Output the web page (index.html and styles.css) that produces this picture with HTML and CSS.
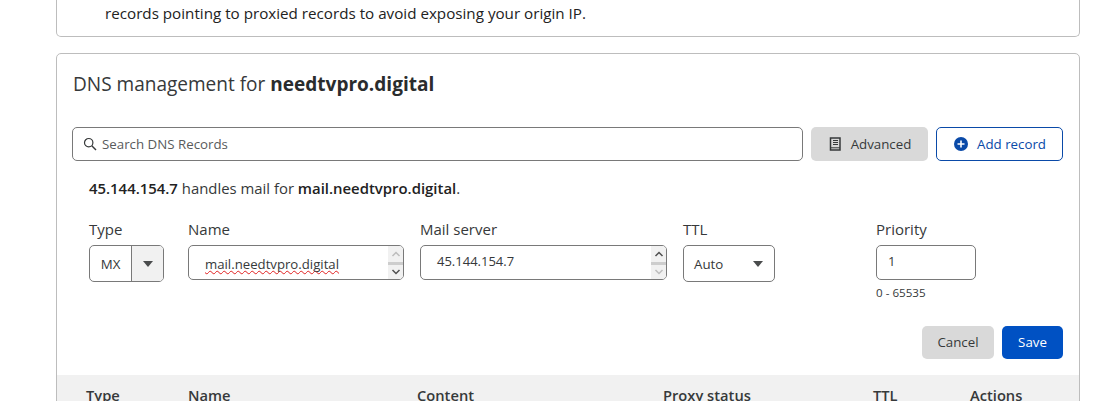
FILE: index.html
```html
<!DOCTYPE html>
<html lang="en">
<head>
<meta charset="utf-8">
<title>DNS management</title>
<link rel="stylesheet" href="styles.css">
</head>
<body>
<main class="page">
  <section class="card notice">
    <p class="notice-text">records pointing to proxied records to avoid exposing your origin IP.</p>
  </section>
  <section class="card dns">
    <h2 class="title">DNS management for <strong>needtvpro.digital</strong></h2>
    <div class="toolbar">
      <div class="search">
        <svg class="search-icon" viewBox="0 0 14 14" width="14" height="14"><circle cx="5.7" cy="5.7" r="4.2" fill="none" stroke="#36393a" stroke-width="1.2"/><path d="M8.8 8.8 13 13" stroke="#36393a" stroke-width="1.4" fill="none"/></svg>
        <span>Search DNS Records</span>
      </div>
      <button class="btn btn-grey btn-adv">
        <svg viewBox="0 0 12 14" width="12" height="14"><path d="M1.5 1h9.500v12h-9.500z" fill="none" stroke="#36393a" stroke-width="1.500"/><path d="M4 3.500h5M4 5.500h5M4 7.500h5" stroke="#36393a" stroke-width="1"/><path d="M1 10.800h10" stroke="#36393a" stroke-width="1"/></svg>
        Advanced
      </button>
      <button class="btn btn-outline">
        <svg viewBox="0 0 14 14" width="14" height="14"><circle cx="7" cy="7" r="7" fill="#0a4aa8"/><path d="M7 3.500v7M3.500 7h7" stroke="#fff" stroke-width="1.600"/></svg>
        Add record
      </button>
    </div>
    <p class="summary"><b>45.144.154.7</b> handles mail for <b>mail.needtvpro.digital</b>.</p>
    <div class="form">
      <div class="field f-type">
        <label class="label">Type</label>
        <div class="select-type"><span class="st-val">MX</span><span class="st-arrow"><i class="caret"></i></span></div>
      </div>
      <div class="field f-name">
        <label class="label">Name</label>
        <div class="textarea">
          <span class="val val-name">mail.needtvpro.digital</span>
          <div class="spin">
            <svg class="spin-a" viewBox="0 0 10 8" width="10" height="8"><path d="M1.500 6 5 2.500 8.500 6" fill="none" stroke="#bdbdbd" stroke-width="1.500"/></svg>
            <i class="spin-thumb"></i>
            <svg class="spin-a" viewBox="0 0 10 8" width="10" height="8"><path d="M1.500 2 5 5.500 8.500 2" fill="none" stroke="#505050" stroke-width="1.500"/></svg>
          </div>
        </div>
      </div>
      <div class="field f-mail">
        <label class="label">Mail server</label>
        <div class="textarea">
          <span class="val val-mail">45.144.154.7</span>
          <div class="spin">
            <svg class="spin-a" viewBox="0 0 10 8" width="10" height="8"><path d="M1.500 6 5 2.500 8.500 6" fill="none" stroke="#505050" stroke-width="1.500"/></svg>
            <i class="spin-thumb"></i>
            <svg class="spin-a" viewBox="0 0 10 8" width="10" height="8"><path d="M1.500 2 5 5.500 8.500 2" fill="none" stroke="#bdbdbd" stroke-width="1.500"/></svg>
          </div>
        </div>
      </div>
      <div class="field f-ttl">
        <label class="label">TTL</label>
        <div class="select-ttl"><span>Auto</span><i class="caret"></i></div>
      </div>
      <div class="field f-pri">
        <label class="label">Priority</label>
        <div class="textarea"><span class="val val-pri">1</span></div>
        <div class="help">0 - 65535</div>
      </div>
    </div>
    <div class="actions">
      <button class="btn btn-grey btn-cancel">Cancel</button>
      <button class="btn btn-blue">Save</button>
    </div>
    <div class="thead">
      <span>Type</span><span>Name</span><span>Content</span><span>Proxy status</span><span>TTL</span><span>Actions</span>
    </div>
  </section>
</main>
</body>
</html>
```
FILE: styles.css
```css
* { box-sizing: border-box; }
html, body { margin: 0; height: 401px; overflow: hidden; background: #fff; }
body { font-family: "Open Sans", "Noto Sans", sans-serif; color: #36393a; font-size: 13.300px; }
.page { width: 1024px; margin-left: 56px; display: flex; flex-direction: column; gap: 16px; }
.card { border: 1px solid #bdbdbd; border-radius: 5px; background: #fff; }
.notice { height: 37px; border-top: 0; border-radius: 0 0 5px 5px; padding-left: 48px; }
.notice-text { margin: 0; font-size: 15.200px; line-height: 26px; color: #222; white-space: nowrap; }
.dns { height: 360px; overflow: hidden; }
.title { margin: 0; padding: 16px 0 0 16px; font-size: 19.050px; line-height: 28px; font-weight: 400; color: #36393a; }
.title strong { font-weight: 700; color: #2a2c2d; }
.toolbar { display: flex; gap: 8px; margin: 29px 16px 0 15px; height: 34px; }
.search { width: 731px; border: 1px solid #797979; border-radius: 5px; display: flex; align-items: center; padding-left: 10px; gap: 5px; color: #595b5c; }
.btn { font: inherit; border-radius: 5px; border: 0; display: inline-flex; align-items: center; justify-content: center; color: #36393a; padding: 0; }
.btn-grey { background: #d9d9d9; }
.btn-adv { width: 117px; gap: 10px; padding-left: 1px; }
.btn-outline { width: 127px; gap: 9px; padding-left: 1px; background: #fff; border: 1px solid #0a4aa8; color: #0a4aa8; }
.summary { margin: 0; padding: 18px 0 0 32px; font-size: 14.900px; line-height: 19px; color: #36393a; }
.summary b { color: #222; font-weight: 600; }
.form { display: flex; align-items: flex-start; gap: 16px; margin: 21px 0 0 32px; height: 107px; }
.field { display: flex; flex-direction: column; }
.label { font-size: 15px; line-height: 20px; margin-bottom: 6px; height: 20px; color: #36393a; }
.f-type { width: 75px; margin-right: 8px; }
.f-name { width: 216px; }
.f-mail { width: 247px; }
.f-ttl { width: 92px; margin-right: 85px; }
.f-pri { width: 100px; }
.select-type { height: 37px; border: 1px solid #797979; border-radius: 5px; display: flex; overflow: hidden; }
.st-val { width: 42px; display: flex; align-items: center; justify-content: center; border-right: 1px solid #797979; }
.st-arrow { flex: 1; background: #f1f1f1; display: flex; align-items: center; justify-content: center; }
.caret { width: 0; height: 0; border-left: 5px solid transparent; border-right: 5px solid transparent; border-top: 6px solid #4a4c4d; }
.textarea { height: 35px; border: 1px solid #797979; border-radius: 5px; display: flex; justify-content: space-between; overflow: hidden; }
.val { display: block; font-size: 13px; }
.val-name { padding: 9px 0 0 16px; font-size: 13.200px; line-height: 18px; text-decoration: underline wavy #e02020 1px; text-underline-offset: 1px; text-decoration-skip-ink: none; }
.val-mail { padding: 6px 0 0 16px; line-height: 18px; }
.val-pri { padding: 6px 0 0 11px; line-height: 18px; }
.spin { width: 15px; background: #f1f1f1; display: flex; flex-direction: column; align-items: center; justify-content: space-between; padding: 4px 0 3px; }
.spin-thumb { width: 100%; height: 3px; background: #cdcdcd; }
.spin-a { display: block; }
.select-ttl { height: 37px; border: 1px solid #797979; border-radius: 5px; display: flex; align-items: center; justify-content: space-between; padding: 0 11px 0 10px; }
.help { font-size: 11.600px; line-height: 14px; margin-top: 6px; }
.actions { display: flex; justify-content: flex-end; gap: 8px; margin: 0 16px 0 0; height: 33px; }
.actions .btn { padding-bottom: 2px; }
.btn-cancel { width: 72px; }
.btn-blue { width: 61px; background: #0051c3; color: #fff; }
.thead { margin-top: 16px; height: 60px; background: #f1f1f1; display: grid; grid-template-columns: 102px 229px 246px 210px 97px 1fr; padding: 10px 0 0 29px; font-size: 14.700px; font-weight: 600; line-height: 20px; color: #36393a; }
```
